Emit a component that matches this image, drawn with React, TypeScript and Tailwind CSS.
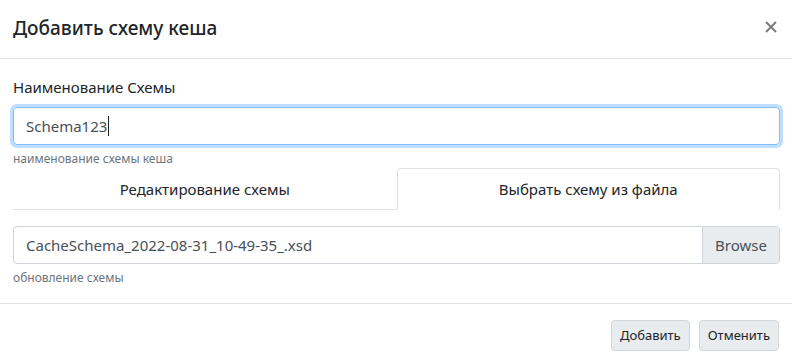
export default function App() {
  return (
    <div
      className="w-[792px] h-[364px] bg-white text-[#212529] overflow-hidden"
      style={{ fontFamily: '"Noto Sans", "Open Sans", sans-serif' }}
    >
      {/* Header */}
      <div className="h-[59px] flex items-center justify-between pl-[13px] pr-[15px] border-b border-[#dee2e6]">
        <h5 className="text-[19px] font-medium leading-[30px] mb-[3px]">Добавить схему кеша</h5>
        <button className="mb-[4px] text-[#7b7b7b]" aria-label="Close">
          <svg width="12" height="12" viewBox="0 0 12 12">
            <path d="M1 1 L11 11 M11 1 L1 11" stroke="currentColor" strokeWidth="2" />
          </svg>
        </button>
      </div>

      {/* Body */}
      <div className="pl-[13px] pr-[12px] pt-[16px] pb-[16px]">
        <label className="block text-[15px] leading-[24px] mb-[8px]">Наименование Схемы</label>
        <div className="h-[38px] flex items-center px-[12px] border border-[#80bdff] rounded-[4px] shadow-[0_0_0_3px_rgba(0,123,255,0.25)] text-[15px] text-[#495057]">
          Schema123
          <span className="inline-block w-px h-[20px] bg-[#222] ml-px" />
        </div>
        <small className="block mt-[4px] text-[12px] leading-[19px] text-[#6c757d]">наименование схемы кеша</small>

        {/* Tabs */}
        <div className="flex border-b border-[#dee2e6]">
          <button className="flex-1 h-[41px] text-[15px] leading-[24px] text-[#212529] border border-transparent">
            Редактирование схемы
          </button>
          <button className="flex-1 h-[42px] -mb-px text-[15px] leading-[24px] text-[#212529] bg-white border border-[#dee2e6] border-b-white rounded-t-[4px]">
            Выбрать схему из файла
          </button>
        </div>

        <div className="pt-[16px]">
          <div className="flex h-[38px] border border-[#ced4da] rounded-[4px] overflow-hidden text-[15px]">
            <div className="flex-1 flex items-center px-[12px] text-[#495057]">CacheSchema_2022-08-31_10-49-35_.xsd</div>
            <div className="w-[77px] flex items-center justify-center bg-[#e9ecef] border-l border-[#ced4da] text-[#495057]">
              Browse
            </div>
          </div>
          <small className="block mt-[4px] text-[12px] leading-[19px] text-[#6c757d]">обновление схемы</small>
        </div>
      </div>

      {/* Footer */}
      <div className="border-t border-[#dee2e6] flex justify-end gap-[9px] pt-[16px] pr-[13px]">
        <button className="h-[31px] px-[8px] text-[13px] rounded-[4px] bg-[#e9ecef] border border-[#d3d6da] text-[#212529]">
          Добавить
        </button>
        <button className="h-[31px] px-[8px] text-[13px] rounded-[4px] bg-[#e9ecef] border border-[#d3d6da] text-[#212529]">
          Отменить
        </button>
      </div>
    </div>
  )
}
